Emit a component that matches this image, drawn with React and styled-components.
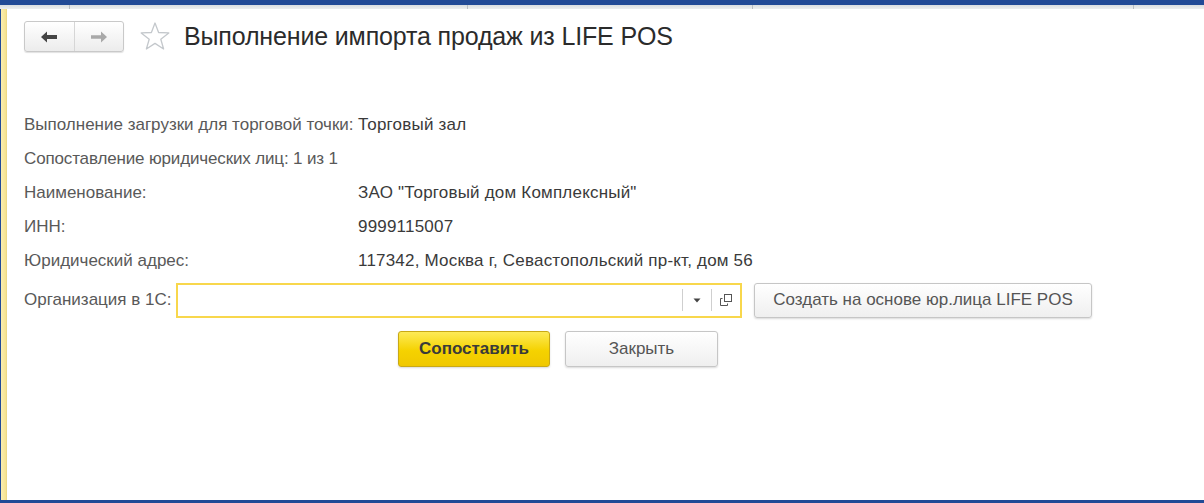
import React from 'react';
import styled, { createGlobalStyle } from 'styled-components';

const GlobalStyle = createGlobalStyle`
  html, body {
    margin: 0;
    padding: 0;
    background: #fff;
  }
  body {
    font-family: "Liberation Sans", Arial, sans-serif;
  }
`;

const Frame = styled.div`
  width: 1204px;
  height: 503px;
  display: flex;
  flex-direction: column;
  overflow: hidden;
  background: #fff;
`;

const TopBar = styled.div`
  height: 5px;
  background: #214a96;
  flex: none;
`;

const TabStrip = styled.div`
  height: 4px;
  flex: none;
  display: flex;
  background: linear-gradient(#d9dde0, #eceeef);
`;

const Tab = styled.span`
  width: ${(p) => p.w}px;
  flex: none;
  border-right: 1px solid #b9bec3;
`;

const Body = styled.div`
  flex: 1;
  display: flex;
  min-height: 0;
`;

const LeftStrip = styled.div`
  width: 6px;
  flex: none;
  border-left: 1px solid #214a96;
  background: linear-gradient(90deg, #fbeeb0, #f4e291 80%, #e9d27a);
`;

const Content = styled.div`
  flex: 1;
  padding: 12px 0 0 17px;
  color: #4a4a4a;
`;

const BottomBar = styled.div`
  height: 3px;
  background: #214a96;
  flex: none;
`;

const Header = styled.div`
  display: flex;
  align-items: center;
  height: 31px;
`;

const NavGroup = styled.div`
  display: flex;
  width: 100px;
  height: 31px;
  box-sizing: border-box;
  border: 1px solid #c9c9c9;
  border-radius: 3px;
  background: linear-gradient(#ffffff, #ececec);
  box-shadow: 0 1px 1px rgba(0, 0, 0, 0.12);
`;

const NavButton = styled.div`
  flex: 1;
  display: flex;
  align-items: center;
  justify-content: center;
  & + & {
    border-left: 1px solid #d6d6d6;
  }
`;

const StarWrap = styled.div`
  margin-left: 15px;
  width: 32px;
  height: 31px;
  display: flex;
  align-items: center;
  justify-content: center;
`;

const Title = styled.h1`
  margin: 0 0 0 13px;
  font-size: 25px;
  font-weight: normal;
  color: #2b2b2b;
  letter-spacing: -0.15px;
`;

const Fields = styled.div`
  margin-top: 56px;
  display: grid;
  grid-template-columns: 334px auto;
  grid-auto-rows: 34px;
  align-items: center;
  font-size: 17px;
`;

const Label = styled.div`
  color: #595959;
  grid-column: ${(p) => (p.wide ? '1 / span 2' : 'auto')};
  letter-spacing: ${(p) => (p.wide ? '-0.15px' : '0')};
  white-space: nowrap;
`;

const Value = styled.div`
  color: #3a3a3a;
  letter-spacing: 0.2px;
  white-space: nowrap;
`;

const OrgRow = styled.div`
  display: flex;
  align-items: center;
  margin-top: 4px;
  height: 36px;
  font-size: 17px;
`;

const OrgLabel = styled.div`
  color: #595959;
  width: 152px;
  white-space: nowrap;
`;

const Input = styled.div`
  width: 566px;
  flex: none;
  height: 35px;
  box-sizing: border-box;
  border: 2px solid #f8d74c;
  background: #fff;
  display: flex;
  align-items: center;
  justify-content: flex-end;
`;

const InputButton = styled.div`
  width: 28px;
  height: 22px;
  display: flex;
  align-items: center;
  justify-content: center;
  border-left: 1px solid #cfcfcf;
`;

const Button = styled.div`
  height: ${(p) => p.h || 35}px;
  width: ${(p) => p.w}px;
  flex: none;
  box-sizing: border-box;
  display: flex;
  align-items: center;
  justify-content: center;
  font-size: 17px;
  border-radius: 3px;
  border: 1px solid ${(p) => (p.primary ? '#c9a915' : '#c6c6c6')};
  background: ${(p) =>
    p.primary
      ? 'linear-gradient(#fdea57, #f5d200 55%, #f0c800)'
      : 'linear-gradient(#ffffff, #efefef)'};
  color: ${(p) => (p.primary ? '#3a3a3a' : '#555')};
  font-weight: ${(p) => (p.primary ? 'bold' : 'normal')};
  box-shadow: 0 1px 2px rgba(0, 0, 0, 0.15);
  white-space: nowrap;
`;

const CreateButton = styled(Button)`
  margin-left: 12px;
`;

const Actions = styled.div`
  display: flex;
  gap: 15px;
  margin: 13px 0 0 374px;
`;

const ArrowLeft = () => (
  <svg width="18" height="14" viewBox="0 0 18 14">
    <path d="M1 7 L7 1.5 V5 H17 V9 H7 V12.5 Z" fill="#454545" />
  </svg>
);

const ArrowRight = () => (
  <svg width="18" height="14" viewBox="0 0 18 14">
    <path d="M17 7 L11 1.5 V5.2 H1 V8.8 H11 V12.5 Z" fill="#a9a9a9" />
  </svg>
);

const Star = () => (
  <svg width="32" height="31" viewBox="0 0 32 31">
    <path
      d="M16 2 L19.6 11.5 L29.8 11.9 L21.8 18.2 L24.6 28 L16 22.4 L7.4 28 L10.2 18.2 L2.2 11.9 L12.4 11.5 Z"
      fill="none"
      stroke="#c4c8cc"
      strokeWidth="1.3"
      strokeLinejoin="round"
    />
  </svg>
);

const DropIcon = () => (
  <svg width="8" height="5" viewBox="0 0 8 5">
    <path d="M0.5 0.5 H7.5 L4 4.5 Z" fill="#444" />
  </svg>
);

const OpenIcon = () => (
  <svg width="12" height="12" viewBox="0 0 12 12">
    <rect x="4.5" y="0.5" width="7" height="7" fill="#fff" stroke="#555" />
    <path d="M2.5 4.5 H0.5 V11.5 H7.5 V9.5" fill="none" stroke="#555" />
  </svg>
);

const fields = [
  ['Наименование:', 'ЗАО "Торговый дом Комплексный"'],
  ['ИНН:', '9999115007'],
  ['Юридический адрес:', '117342, Москва г, Севастопольский пр-кт, дом 56'],
];

export default function App() {
  return (
    <>
      <GlobalStyle />
      <Frame>
        <TopBar />
        <TabStrip>
          <Tab w={69} />
          <Tab w={397} />
          <Tab w={284} />
          <Tab w={380} />
        </TabStrip>
        <Body>
          <LeftStrip />
          <Content>
            <Header>
              <NavGroup>
                <NavButton>
                  <ArrowLeft />
                </NavButton>
                <NavButton>
                  <ArrowRight />
                </NavButton>
              </NavGroup>
              <StarWrap>
                <Star />
              </StarWrap>
              <Title>Выполнение импорта продаж из LIFE POS</Title>
            </Header>

            <Fields>
              <Label>Выполнение загрузки для торговой точки:</Label>
              <Value>Торговый зал</Value>
              <Label wide>Сопоставление юридических лиц: 1 из 1</Label>
              {fields.map(([label, value]) => (
                <React.Fragment key={label}>
                  <Label>{label}</Label>
                  <Value>{value}</Value>
                </React.Fragment>
              ))}
            </Fields>

            <OrgRow>
              <OrgLabel>Организация в 1С:</OrgLabel>
              <Input>
                <InputButton>
                  <DropIcon />
                </InputButton>
                <InputButton>
                  <OpenIcon />
                </InputButton>
              </Input>
              <CreateButton w={338}>Создать на основе юр.лица LIFE POS</CreateButton>
            </OrgRow>

            <Actions>
              <Button primary w={152} h={36}>
                Сопоставить
              </Button>
              <Button w={153} h={36}>
                Закрыть
              </Button>
            </Actions>
          </Content>
        </Body>
        <BottomBar />
      </Frame>
    </>
  );
}
